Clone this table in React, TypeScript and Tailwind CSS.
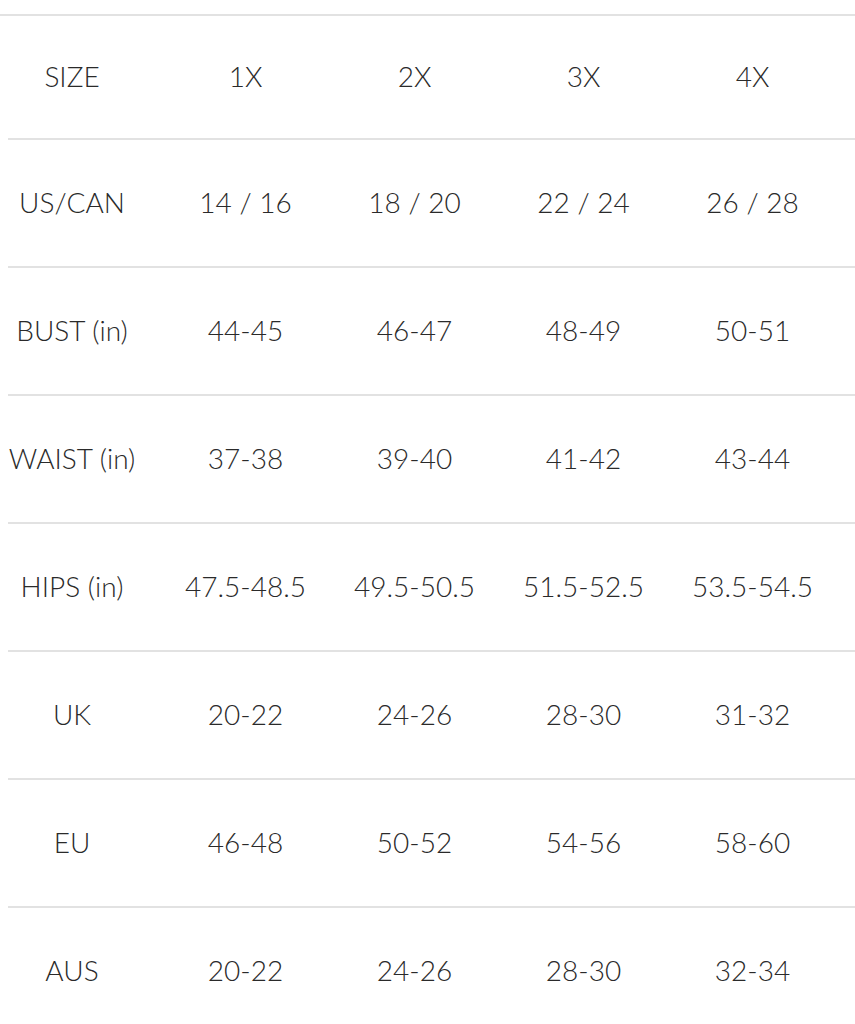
const rows: string[][] = [
  ["SIZE", "1X", "2X", "3X", "4X"],
  ["US/CAN", "14 / 16", "18 / 20", "22 / 24", "26 / 28"],
  ["BUST (in)", "44-45", "46-47", "48-49", "50-51"],
  ["WAIST (in)", "37-38", "39-40", "41-42", "43-44"],
  ["HIPS (in)", "47.5-48.5", "49.5-50.5", "51.5-52.5", "53.5-54.5"],
  ["UK", "20-22", "24-26", "28-30", "31-32"],
  ["EU", "46-48", "50-52", "54-56", "58-60"],
  ["AUS", "20-22", "24-26", "28-30", "32-34"],
];

export default function App() {
  return (
    <div className="min-h-screen bg-white pt-[14px] text-[#2a2a2a] font-['Lato','Liberation_Sans',sans-serif] font-light text-[28px]">
      <div className="border-t-2 border-[#e2e2e2]">
        {rows.map((row, i) => (
          <div
            key={row[0]}
            className={`ml-2 grid grid-cols-[153px_repeat(4,169px)] items-center border-b-2 border-[#e2e2e2] ${
              i === 0 ? "h-[124px]" : "h-[128px]"
            }`}
          >
            {row.map((cell, j) => (
              <div
                key={j}
                className={`-mt-[2px] whitespace-nowrap text-center ${j === 0 ? "pr-[25px]" : ""}`}
              >
                {cell}
              </div>
            ))}
          </div>
        ))}
      </div>
    </div>
  );
}
